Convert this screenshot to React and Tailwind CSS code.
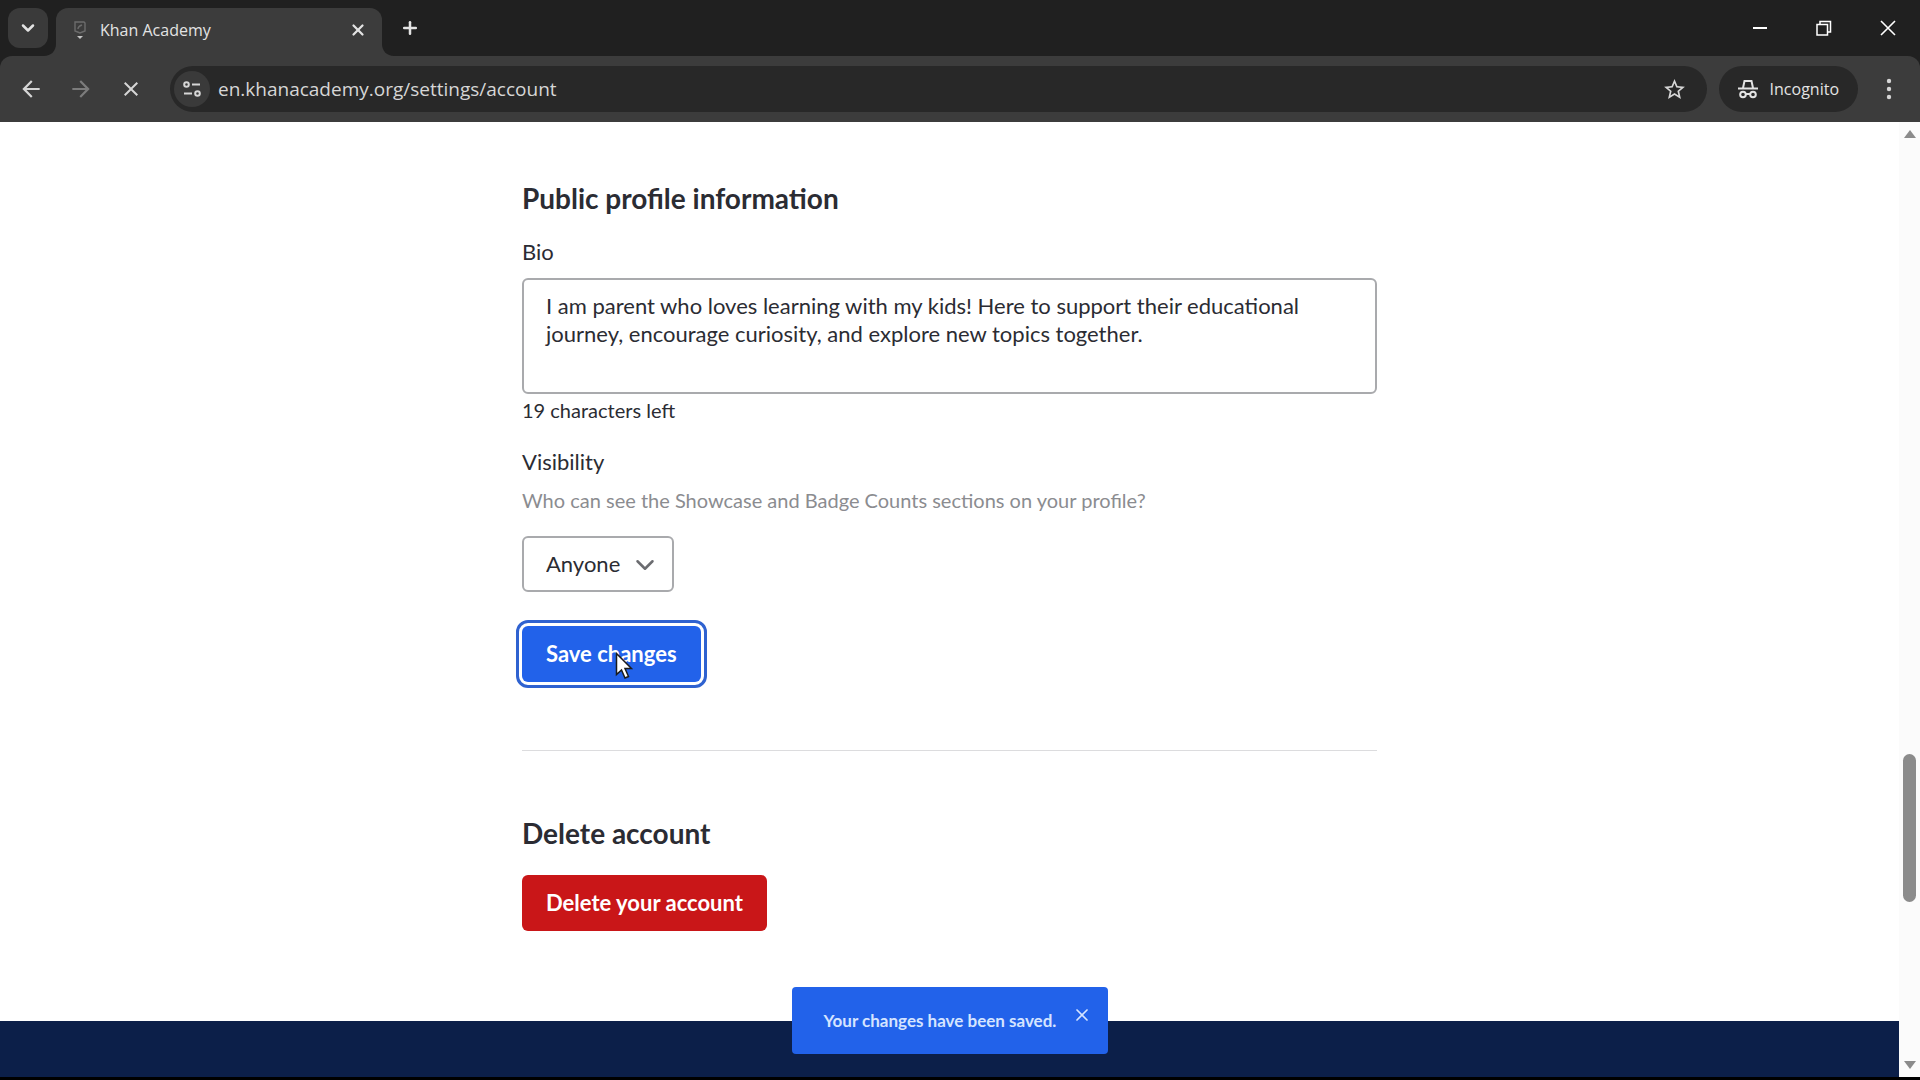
import React from "react";
import { ChevronDown, Plus, X } from "lucide-react";
import { MdArrowBack, MdArrowForward, MdClose, MdStarBorder } from "react-icons/md";

function TabStrip() {
  return (
    <div className="flex h-14 items-end justify-between pl-2">
      <div className="flex h-full items-center">
        <button
          aria-label="Search tabs"
          className="flex size-10 items-center justify-center rounded-xl bg-[#3a3a3a] text-[#e3e3e3]"
        >
          <ChevronDown size={20} strokeWidth={3} />
        </button>
        {/* active tab with flared bottom corners */}
        <div className="ml-2 flex h-full items-end">
          <div className="relative flex h-12 w-[326px] items-center rounded-t-xl bg-[#3c3c3c] pr-3 pb-1 pl-4">
            <Flare className="absolute bottom-0 -left-3 size-3 text-[#3c3c3c]" />
            <Flare className="absolute -right-3 bottom-0 size-3 -scale-x-100 text-[#3c3c3c]" />
            <Favicon />
            <span className="ml-3 flex-1 text-base text-[#e3e3e3]">Khan Academy</span>
            <button aria-label="Close tab" className="flex size-6 items-center justify-center text-[#e3e3e3]">
              <X size={18} strokeWidth={3} />
            </button>
          </div>
        </div>
        <button aria-label="New tab" className="ml-4 flex size-6 items-center justify-center text-[#e3e3e3]">
          <Plus size={20} strokeWidth={3} />
        </button>
      </div>
      <WindowControls />
    </div>
  );
}

function Flare({ className }) {
  return (
    <svg viewBox="0 0 12 12" className={className} fill="currentColor" aria-hidden="true">
      <path d="M12 0v12H0C7 12 12 7 12 0Z" />
    </svg>
  );
}

function Favicon() {
  return (
    <svg width="16" height="22" viewBox="0 0 16 22" fill="none" aria-hidden="true">
      <path d="M3 3h9l1 1v8l-5 2-5-2V3Z" stroke="#6c6c6c" strokeWidth="1.4" />
      <path d="M6 10c0-2 1-3 4-4" stroke="#6c6c6c" strokeWidth="1.4" />
      <path d="M5 17h6l-3 3z" fill="#c4c4c4" />
    </svg>
  );
}

function WindowControls() {
  return (
    <div className="flex h-full items-center text-white">
      <button aria-label="Minimize" className="flex h-full w-16 items-center justify-center">
        <svg width="16" height="16" viewBox="0 0 16 16" stroke="currentColor" strokeWidth="2">
          <path d="M1 8h14" />
        </svg>
      </button>
      <button aria-label="Restore" className="flex h-full w-16 items-center justify-center">
        <svg width="16" height="16" viewBox="0 0 16 16" fill="none" stroke="currentColor" strokeWidth="1.5">
          <path d="M1 4.500h10.500v10.500H1zM4 4.500V1.500h10.500v10.500h-3" />
        </svg>
      </button>
      <button aria-label="Close" className="flex h-full w-16 items-center justify-center">
        <svg width="16" height="16" viewBox="0 0 16 16" stroke="currentColor" strokeWidth="1.6">
          <path d="m1 1 14 14M15 1 1 15" />
        </svg>
      </button>
    </div>
  );
}

function Toolbar() {
  return (
    <div className="flex h-[66px] items-center rounded-t-xl bg-[#3c3c3c] pl-4 text-[#d6d6d6]">
      <div className="flex items-center gap-5">
        <button aria-label="Back" className="flex size-[30px] items-center justify-center">
          <MdArrowBack size={26} />
        </button>
        <button aria-label="Forward" className="flex size-[30px] items-center justify-center text-[#7c7c7c]">
          <MdArrowForward size={26} />
        </button>
        <button aria-label="Stop loading" className="flex size-[30px] items-center justify-center">
          <MdClose size={24} />
        </button>
      </div>
      <div className="ml-6 flex h-[46px] flex-1 items-center rounded-full bg-[#282828] pr-5 pl-1">
        <button
          aria-label="View site information"
          className="flex size-9 items-center justify-center rounded-full bg-[#3a3a3a]"
        >
          <svg width="20" height="20" viewBox="0 0 20 20" fill="none" stroke="currentColor" strokeWidth="2">
            <circle cx="4.500" cy="5.500" r="2.300" />
            <path d="M10 5.500h8M2 14.500h8" />
            <circle cx="15.500" cy="14.500" r="2.300" />
          </svg>
        </button>
        <input
          aria-label="Address"
          defaultValue="en.khanacademy.org/settings/account"
          className="ml-2 flex-1 bg-transparent text-[19px] outline-none"
        />
        <button aria-label="Bookmark this tab">
          <MdStarBorder size={25} />
        </button>
      </div>
      <button className="ml-3 flex h-[46px] items-center gap-3 rounded-full bg-[#282828] px-[19px] text-base text-[#e3e3e3]">
        <IncognitoIcon />
        Incognito
      </button>
      <button aria-label="Menu" className="flex w-[62px] items-center justify-center">
        <svg width="6" height="22" viewBox="0 0 6 22" fill="currentColor">
          <circle cx="3" cy="3" r="2.200" />
          <circle cx="3" cy="11" r="2.200" />
          <circle cx="3" cy="19" r="2.200" />
        </svg>
      </button>
    </div>
  );
}

function IncognitoIcon() {
  return (
    <svg width="20" height="20" viewBox="0 0 20 20" fill="none" stroke="currentColor" strokeWidth="2" aria-hidden="true">
      <path d="M5 9 6.500 2h7L15 9M0 9.500h20" />
      <circle cx="5" cy="15.500" r="2.800" />
      <circle cx="15" cy="15.500" r="2.800" />
      <path d="M8 15h4" />
    </svg>
  );
}

function Scrollbar() {
  return (
    <div className="flex w-[21px] flex-col items-center bg-[#fbfbfb] py-2 text-[#8b8b8b]" aria-hidden="true">
      <svg width="12" height="8" viewBox="0 0 12 8" fill="currentColor">
        <path d="M6 0l6 8H0z" />
      </svg>
      <div className="flex flex-1 flex-col py-4">
        <div className="grow-[598]" />
        <div className="h-[148px] w-[13px] rounded-full bg-[#8b8b8b]" />
        <div className="grow-[143]" />
      </div>
      <svg width="12" height="8" viewBox="0 0 12 8" fill="currentColor">
        <path d="M0 0h12L6 8z" />
      </svg>
    </div>
  );
}

function ProfileForm() {
  return (
    <form className="flex flex-col items-start" onSubmit={(e) => e.preventDefault()}>
      <h2 className="text-[28px] leading-8 font-bold">Public profile information</h2>
      <label htmlFor="bio" className="mt-6 text-[22px] leading-7">
        Bio
      </label>
      <textarea
        id="bio"
        rows={3}
        defaultValue="I am parent who loves learning with my kids! Here to support their educational journey, encourage curiosity, and explore new topics together."
        className="mt-3 h-[116px] w-full resize-none rounded-md border-2 border-[#a9aaad] px-[22px] py-3 text-[22px] leading-7 outline-none"
      />
      <p className="mt-0.5 text-xl leading-7">19 characters left</p>
      <label htmlFor="visibility" className="mt-6 text-[22px] leading-7">
        Visibility
      </label>
      <p className="mt-2.5 text-xl leading-7 text-[#8b8c90]">
        Who can see the Showcase and Badge Counts sections on your profile?
      </p>
      <div className="relative mt-[22px]">
        <select
          id="visibility"
          className="h-14 w-[152px] appearance-none rounded-md border-2 border-[#a9aaad] bg-white pb-0.5 pl-[22px] text-[22px] outline-none"
        >
          <option>Anyone</option>
        </select>
        <ChevronDown
          size={30}
          strokeWidth={2}
          className="pointer-events-none absolute top-3.5 right-3.5 text-[#6b6c70]"
        />
      </div>
      <div className="relative mt-[34px]">
        <button
          type="submit"
          className="h-14 rounded-md bg-[#2262ea] px-6 pb-0.5 text-[22px] font-bold text-white outline-3 outline-offset-3 outline-[#2f62d0]"
        >
          Save changes
        </button>
        <Cursor />
      </div>
    </form>
  );
}

function Cursor() {
  return (
    <svg
      width="18"
      height="28"
      viewBox="0 0 18 28"
      className="pointer-events-none absolute top-[26px] left-[93px]"
      aria-hidden="true"
    >
      <path
        d="M1.500 1.500v21l5-4.500 3.500 8 3.500-1.500-3.500-8h6.500z"
        fill="#fff"
        stroke="#1b1b1b"
        strokeWidth="1.5"
      />
    </svg>
  );
}

function Toast() {
  return (
    <div
      role="status"
      className="absolute bottom-[23px] left-1/2 flex h-[67px] w-[316px] -translate-x-1/2 items-center rounded-sm bg-[#2262ea] pl-8 text-[#d5e4ff]"
    >
      <span className="flex-1 text-[17px] font-bold whitespace-nowrap">Your changes have been saved.</span>
      <button aria-label="Dismiss" className="mr-4 mb-3 flex size-5 items-center justify-center">
        <X size={24} strokeWidth={2} />
      </button>
    </div>
  );
}

function App() {
  return (
    <div className="flex min-h-screen flex-col border-b-3 border-black bg-white font-['Open_Sans',sans-serif]">
      <header className="bg-[#202020]">
        <TabStrip />
        <Toolbar />
      </header>
      <div className="flex flex-1 font-['Lato',sans-serif]">
        <div className="relative flex flex-1 flex-col text-[#2b2c33]">
          <main className="mx-auto w-full max-w-[855px] pt-[60px] pb-[90px]">
            <ProfileForm />
            <hr className="mt-[68px] border-[#dcdcde]" />
            <section className="mt-[66px]">
              <h2 className="text-[28px] leading-8 font-bold">Delete account</h2>
              <button className="mt-[26px] h-14 rounded-md bg-[#c91618] px-6 pb-0.5 text-[22px] font-bold text-white">
                Delete your account
              </button>
            </section>
          </main>
          <footer className="flex-1 bg-[#0c1f49]" />
          <Toast />
        </div>
        <Scrollbar />
      </div>
    </div>
  );
}

export default App;
